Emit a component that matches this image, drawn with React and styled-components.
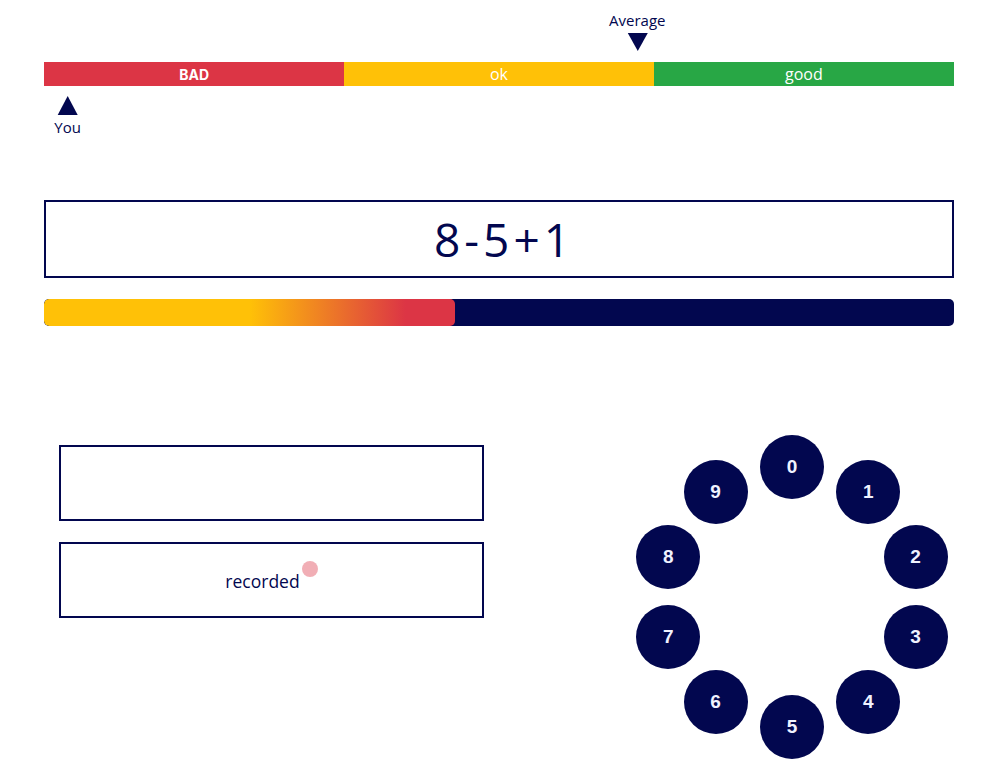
import styled, { createGlobalStyle } from 'styled-components';

const NAVY = '#02074f';

const GlobalStyle = createGlobalStyle`
  body {
    margin: 0;
    background: #fff;
    font-family: 'Open Sans', 'Liberation Sans', sans-serif;
    color: ${NAVY};
  }
`;

const digits = [0, 1, 2, 3, 4, 5, 6, 7, 8, 9];
const WHEEL_RADIUS = 130;
const KEY_SIZE = 64;
const WHEEL_SIZE = WHEEL_RADIUS * 2 + KEY_SIZE;

const App = () => {
  return (
    <Page>
      <GlobalStyle />
      <ScaleSection>
        <AboveRow>
          <Marker style={{ left: '65.2%' }} className="above">
            <span>Average</span>
            <TriangleDown />
          </Marker>
        </AboveRow>
        <Scale>
          <Segment color="#dc3545" share={33} bold>
            BAD
          </Segment>
          <Segment color="#ffc107" share={34}>
            ok
          </Segment>
          <Segment color="#28a745" share={33}>
            good
          </Segment>
        </Scale>
        <BelowRow>
          <Marker style={{ left: '2.6%' }} className="below">
            <TriangleUp />
            <span>You</span>
          </Marker>
        </BelowRow>
      </ScaleSection>

      <Expression>8-5+1</Expression>

      <Timer>
        <TimerFill style={{ width: '45.2%' }} />
      </Timer>

      <Lower>
        <Answers>
          <AnswerBox />
          <AnswerBox>
            <Recorded>
              recorded
              <Dot />
            </Recorded>
          </AnswerBox>
        </Answers>
        <Wheel>
          {digits.map((d) => {
            const angle = ((-90 + d * 36) * Math.PI) / 180;
            const cx = WHEEL_SIZE / 2 + WHEEL_RADIUS * Math.cos(angle);
            const cy = WHEEL_SIZE / 2 + WHEEL_RADIUS * Math.sin(angle);
            return (
              <Key
                key={d}
                style={{ left: cx - KEY_SIZE / 2, top: cy - KEY_SIZE / 2 }}
              >
                {d}
              </Key>
            );
          })}
        </Wheel>
      </Lower>
    </Page>
  );
};

const Page = styled.div`
  width: 910px;
  padding: 0 47px 0 44px;
  display: flex;
  flex-direction: column;
`;

const ScaleSection = styled.div`
  display: flex;
  flex-direction: column;
`;

const AboveRow = styled.div`
  position: relative;
  height: 62px;
`;

const BelowRow = styled.div`
  position: relative;
  height: 114px;
`;

const Marker = styled.div`
  position: absolute;
  transform: translateX(-50%);
  display: flex;
  flex-direction: column;
  align-items: center;
  color: ${NAVY};
  font-size: 15px;

  &.above {
    bottom: 11px;
    gap: 3px;
  }

  &.below {
    top: 10px;
    gap: 2px;
  }
`;

const TriangleDown = styled.div`
  width: 0;
  height: 0;
  border-left: 10px solid transparent;
  border-right: 10px solid transparent;
  border-top: 18px solid ${NAVY};
`;

const TriangleUp = styled.div`
  width: 0;
  height: 0;
  border-left: 10px solid transparent;
  border-right: 10px solid transparent;
  border-bottom: 19px solid ${NAVY};
`;

const Scale = styled.div`
  display: flex;
  height: 24px;
`;

const Segment = styled.div`
  width: ${(props) => props.share}%;
  background: ${(props) => props.color};
  color: #fff;
  display: flex;
  align-items: center;
  justify-content: center;
  font-size: ${(props) => (props.bold ? 14 : 16)}px;
  font-family: ${(props) =>
    props.bold ? "Inter, 'Open Sans', sans-serif" : "'Open Sans', sans-serif"};
  font-weight: ${(props) => (props.bold ? 700 : 400)};
`;

const Expression = styled.div`
  box-sizing: border-box;
  height: 78px;
  border: 2px solid ${NAVY};
  display: flex;
  align-items: center;
  justify-content: center;
  font-size: 46px;
  letter-spacing: 4px;
  padding-left: 10px;
  color: ${NAVY};
`;

const Timer = styled.div`
  margin-top: 21px;
  height: 27px;
  border-radius: 5px;
  background: ${NAVY};
  overflow: hidden;
`;

const TimerFill = styled.div`
  height: 100%;
  border-radius: 5px;
  background: linear-gradient(to right, #ffc107 50%, #dc3545 88%);
`;

const Lower = styled.div`
  display: flex;
  align-items: flex-start;
  margin-top: 109px;
  padding-left: 15px;
`;

const Answers = styled.div`
  width: 425px;
  padding-top: 10px;
  display: flex;
  flex-direction: column;
  gap: 21px;
`;

const AnswerBox = styled.div`
  box-sizing: border-box;
  height: 76px;
  border: 2px solid ${NAVY};
  display: flex;
  align-items: center;
  justify-content: center;
`;

const Recorded = styled.span`
  display: inline-flex;
  align-items: flex-start;
  font-size: 17.5px;
  color: ${NAVY};
  padding-top: 1px;
`;

const Dot = styled.span`
  display: inline-block;
  width: 16px;
  height: 16px;
  margin-left: 2px;
  margin-top: -8px;
  border-radius: 50%;
  background: rgba(220, 53, 69, 0.4);
`;

const Wheel = styled.div`
  position: relative;
  margin-left: 146px;
  width: ${WHEEL_SIZE}px;
  height: ${WHEEL_SIZE}px;
  flex-shrink: 0;
`;

const Key = styled.button`
  position: absolute;
  width: ${KEY_SIZE}px;
  height: ${KEY_SIZE}px;
  border-radius: 50%;
  border: none;
  padding: 0;
  background: ${NAVY};
  color: #f0f2ff;
  font-family: 'Liberation Sans', Arial, sans-serif;
  font-weight: 700;
  font-size: 19px;
  display: flex;
  align-items: center;
  justify-content: center;
  cursor: pointer;
`;

export default App;
